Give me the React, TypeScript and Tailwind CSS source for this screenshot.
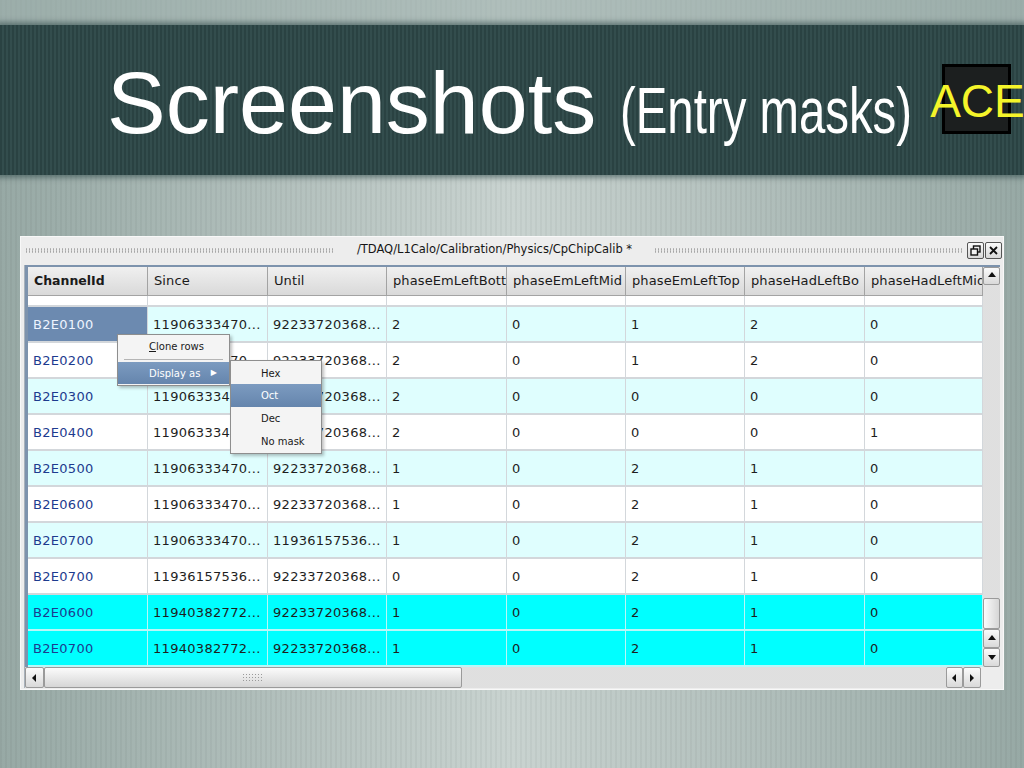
import React from "react";

type Row = { id: string; since: string; until: string; v: string[]; bg: "l" | "w" | "c" };

const rows: Row[] = [
  { id: "B2E0100", since: "11906333470...", until: "92233720368...", v: ["2", "0", "1", "2", "0"], bg: "l" },
  { id: "B2E0200", since: "11906333470...", until: "92233720368...", v: ["2", "0", "1", "2", "0"], bg: "w" },
  { id: "B2E0300", since: "11906333470...", until: "92233720368...", v: ["2", "0", "0", "0", "0"], bg: "l" },
  { id: "B2E0400", since: "11906333470...", until: "92233720368...", v: ["2", "0", "0", "0", "1"], bg: "w" },
  { id: "B2E0500", since: "11906333470...", until: "92233720368...", v: ["1", "0", "2", "1", "0"], bg: "l" },
  { id: "B2E0600", since: "11906333470...", until: "92233720368...", v: ["1", "0", "2", "1", "0"], bg: "w" },
  { id: "B2E0700", since: "11906333470...", until: "11936157536...", v: ["1", "0", "2", "1", "0"], bg: "l" },
  { id: "B2E0700", since: "11936157536...", until: "92233720368...", v: ["0", "0", "2", "1", "0"], bg: "w" },
  { id: "B2E0600", since: "11940382772...", until: "92233720368...", v: ["1", "0", "2", "1", "0"], bg: "c" },
  { id: "B2E0700", since: "11940382772...", until: "92233720368...", v: ["1", "0", "2", "1", "0"], bg: "c" },
];

const headers = [
  "ChannelId",
  "Since",
  "Until",
  "phaseEmLeftBott",
  "phaseEmLeftMid",
  "phaseEmLeftTop",
  "phaseHadLeftBo",
  "phaseHadLeftMid",
];

const COLS = "grid grid-cols-[120px_120px_119px_120px_119px_119px_120px_118px]";

function Tri({ dir }: { dir: "up" | "down" | "left" | "right" }) {
  const pts =
    dir === "up"
      ? "1,6 9,6 5,1"
      : dir === "down"
      ? "1,2 9,2 5,7"
      : dir === "left"
      ? "6,1 6,9 2,5"
      : "3,1 3,9 7,5";
  return (
    <svg width="10" height="10" viewBox="0 0 10 10">
      <polygon points={pts} fill="#111" />
    </svg>
  );
}

function SBtn({ dir, cls }: { dir: "up" | "down" | "left" | "right"; cls: string }) {
  return (
    <div
      className={
        "flex items-center justify-center border border-[#9a9a9a] rounded-[2px] bg-[linear-gradient(180deg,#fbfbfb,#d9d9d9)] " +
        cls
      }
    >
      <Tri dir={dir} />
    </div>
  );
}

const track =
  "bg-[#f1f1f1] bg-[radial-gradient(circle,#d6d6d6_0.6px,transparent_0.9px)] bg-[length:2px_2px]";

export default function App() {
  return (
    <div className="relative w-[1024px] h-[768px] overflow-hidden font-['DejaVu_Sans',sans-serif] [background-image:repeating-linear-gradient(90deg,rgba(0,0,0,0.035)_0px,rgba(0,0,0,0.035)_2px,transparent_2px,transparent_5px),linear-gradient(90deg,#97a9a5,#c9d3d0_50%,#97a9a5)]">
      {/* top spacer */}
      <div className="h-[25px] bg-[#9fb0ad]/60" />

      {/* dark title band */}
      <div className="h-[150px] flex items-start shadow-[0_0_5px_3px_rgba(47,72,72,0.55)] [background-image:repeating-linear-gradient(90deg,#2a4242_0px,#2a4242_2px,#334d4d_2px,#334d4d_4px)] font-['Liberation_Sans',Arial,sans-serif] whitespace-nowrap">
        <div className="ml-[107px] mt-[34px] text-[88px] leading-none text-white">Screenshots</div>
        <div className="ml-[24px] mt-[54px] w-[290px] shrink-0">
          <span className="inline-block origin-left scale-x-[0.74] text-[64px] leading-none text-white">
            (Entry masks)
          </span>
        </div>
        <div className="relative ml-[20px] mt-[53px] shrink-0">
          <div className="absolute left-[12px] top-[-14px] w-[69px] h-[70px] bg-[#1c1f1f] border-[3px] border-black" />
          <span className="relative text-[46px] leading-none text-[#f5f52a]">ACE</span>
        </div>
      </div>

      {/* window */}
      <div className="mt-[61px] ml-[20px] w-[984px] h-[454px] bg-[#ededed] border border-[#f8f8f8] flex flex-col">
        {/* title bar */}
        <div className="h-[26px] flex items-center pl-[4px] pr-[1px]">
          <div className="flex-1 h-[5px] bg-[radial-gradient(circle,#a0a0a0_0.75px,transparent_1px)] bg-[length:3px_2.5px]" />
          <div className="mx-[22px] text-[11.5px] text-[#151515] whitespace-nowrap">
            /TDAQ/L1Calo/Calibration/Physics/CpChipCalib *
          </div>
          <div className="flex-1 h-[5px] bg-[radial-gradient(circle,#a0a0a0_0.75px,transparent_1px)] bg-[length:3px_2.5px]" />
          <div className="ml-[3px] w-[17px] h-[17px] border border-[#555] rounded-[2px] bg-[linear-gradient(180deg,#fafafa,#d8d8d8)] flex items-center justify-center">
            <svg width="11" height="11" viewBox="0 0 11 11">
              <rect x="3.5" y="1" width="6.5" height="6" fill="none" stroke="#111" strokeWidth="1.4" />
              <rect x="1" y="4" width="6.5" height="6" fill="#f0f0f0" stroke="#111" strokeWidth="1.4" />
            </svg>
          </div>
          <div className="ml-[1px] w-[17px] h-[17px] border border-[#555] rounded-[2px] bg-[linear-gradient(180deg,#fafafa,#d8d8d8)] flex items-center justify-center">
            <svg width="11" height="11" viewBox="0 0 11 11">
              <path d="M2 2 L9 9 M9 2 L2 9" stroke="#111" strokeWidth="1.8" />
            </svg>
          </div>
        </div>

        {/* table frame */}
        <div className="mt-[2px] ml-[3px] w-[976px] h-[423px] border-l border-[#a9b2bb] flex flex-col">
          <div className="border-t-2 border-l-[3px] border-[#7d93ad] flex h-[402px]">
            {/* grid */}
            <div className="w-[955px] flex flex-col bg-white">
              <div className={COLS + " h-[29px]"}>
                {headers.map((h, i) => (
                  <div
                    key={i}
                    className={
                      "flex items-center pl-[6px] overflow-hidden whitespace-nowrap text-[#1a1a1a] border-r border-b border-[#a3a3a3] bg-[linear-gradient(180deg,#f0f0f0,#d9d9d9)] " +
                      (i === 0 ? "font-bold text-[12.5px]" : "text-[13px] tracking-[0.1px]")
                    }
                  >
                    {h}
                  </div>
                ))}
              </div>
              <div className={COLS + " h-[11px]"}>
                {headers.map((_, i) => (
                  <div key={i} className="border-r border-b-2 border-[#d3d7db]" />
                ))}
              </div>
              {rows.map((r, ri) => {
                const rowBg =
                  r.bg === "l" ? "bg-[#dffefe]" : r.bg === "c" ? "bg-[#00ffff]" : "bg-white";
                const line = r.bg === "c" ? "border-[#b9f7f7]" : "border-[#d3d7db]";
                const cells = [r.id, r.since, r.until, ...r.v];
                return (
                  <div key={ri} className={COLS + " h-[36px]"}>
                    {cells.map((c, ci) => {
                      const sel = ri === 0 && ci === 0;
                      return (
                        <div
                          key={ci}
                          className={
                            "flex items-center pl-[5px] pt-[1px] overflow-hidden whitespace-nowrap text-[13px] tracking-[0.3px] border-r border-b-2 " +
                            line +
                            " " +
                            (sel
                              ? "bg-[#6c8ab0] text-[#eef4ff]"
                              : rowBg + " " + (ci === 0 ? "text-[#1d3b8f]" : "text-[#1e1e1e]"))
                          }
                        >
                          {c}
                        </div>
                      );
                    })}
                  </div>
                );
              })}
            </div>
            {/* vertical scrollbar */}
            <div className={"w-[17px] flex flex-col " + track}>
              <SBtn dir="up" cls="h-[18px]" />
              <div className="flex-1" />
              <div className="h-[31px] border border-[#9a9a9a] rounded-[2px] bg-[linear-gradient(90deg,#fbfbfb,#d6d6d6)]" />
              <SBtn dir="up" cls="h-[19px]" />
              <SBtn dir="down" cls="h-[19px]" />
            </div>
          </div>
          {/* horizontal scrollbar */}
          <div className="flex h-[21px]">
            <div className={"w-[956px] flex " + track}>
              <SBtn dir="left" cls="w-[19px]" />
              <div className="w-[418px] border border-[#9a9a9a] rounded-[2px] bg-[linear-gradient(180deg,#fbfbfb,#d6d6d6)] flex items-center justify-center">
                <div className="w-[22px] h-[10px] bg-[radial-gradient(circle,#9a9a9a_0.6px,transparent_0.9px)] bg-[length:3px_3px]" />
              </div>
              <div className="flex-1" />
              <SBtn dir="left" cls="w-[17px]" />
              <SBtn dir="right" cls="w-[18px]" />
            </div>
            <div className="flex-1 bg-[#ededed]" />
          </div>
        </div>
      </div>

      {/* context menu */}
      <div className="absolute left-[117px] top-[334px] w-[113px] bg-[#f4f4f4] border border-[#8e8e8e] shadow-[2px_2px_3px_rgba(0,0,0,0.25)] text-[10px] text-[#1a1a1a] py-[1px]">
        <div className="h-[21px] flex items-center pl-[31px]">
          <span>
            <span className="underline">C</span>lone rows
          </span>
        </div>
        <div className="mx-[6px] my-[2px] h-px bg-[#b5b5b5]" />
        <div className="h-[22px] flex items-center pl-[31px] pr-[12px] bg-[linear-gradient(180deg,#7c9bc0,#6585ad)] text-white">
          <span className="flex-1">Display as</span>
          <span className="text-[8px]">▶</span>
        </div>
      </div>

      {/* submenu */}
      <div className="absolute left-[230px] top-[360px] w-[92px] bg-[#f4f4f4] border border-[#8e8e8e] shadow-[2px_2px_3px_rgba(0,0,0,0.25)] text-[10px] text-[#1a1a1a] py-[1px]">
        <div className="h-[22px] flex items-center pl-[30px]">Hex</div>
        <div className="h-[23px] flex items-center pl-[30px] bg-[linear-gradient(180deg,#7c9bc0,#6585ad)] text-white">
          Oct
        </div>
        <div className="h-[23px] flex items-center pl-[30px]">Dec</div>
        <div className="h-[22px] flex items-center pl-[30px]">No mask</div>
      </div>
    </div>
  );
}
